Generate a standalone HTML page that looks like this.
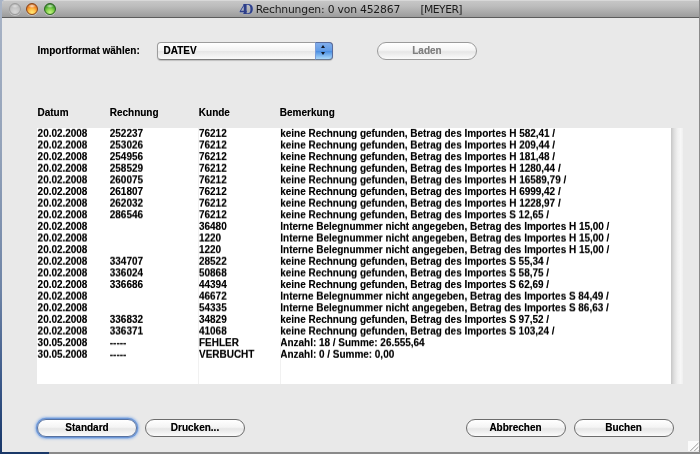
<!DOCTYPE html>
<html><head><meta charset="utf-8">
<style>
*{box-sizing:border-box;margin:0;padding:0}
html,body{width:700px;height:454px;overflow:hidden}
body{background:#8a8a8a;position:relative;font-family:"Liberation Sans",sans-serif;color:#000}
#desk1{position:absolute;left:0;top:0;width:3px;height:454px;background:linear-gradient(#a9b4c6 0,#93a2b9 150px,#6e84a6 290px,#3d5a8a 380px,#1d3c6e 440px,#1a3868 454px)}
#desk3{position:absolute;left:0;top:0;width:8px;height:8px;background:#a9b4c6}
#desk2{position:absolute;left:0;top:450px;width:49px;height:4px;background:#1a3868}
#win{position:absolute;left:2px;top:0;width:697px;height:451.5px;overflow:hidden;will-change:transform;border-radius:4px 0 0 0}
#winbg{position:absolute;left:2.3px;top:0;width:697px;height:451.5px;background:#e9e9e9;border-radius:4px 0 0 0}
#tb{position:absolute;left:0;top:0;width:698px;height:18px;background:linear-gradient(#d8d8d8 0,#d8d8d8 1px,#c6c6c6 1px,#bdbdbd 6px,#9c9c9c 17px,#5c5c5c 17px,#5c5c5c 18px)}
.tl{position:absolute;top:3px;width:12px;height:12px;border-radius:50%;box-shadow:0 1px 0.5px rgba(255,255,255,.35)}
#title,#title2{position:absolute;left:253.7px;top:1.6px;font-family:"DejaVu Sans","Liberation Sans",sans-serif;font-size:10.8px;line-height:15px;white-space:pre;color:#1a1a1a;letter-spacing:-0.2px}
#title2{left:418.4px;letter-spacing:-0.55px}
#logo{position:absolute;left:237.4px;top:0.7px;font-family:"Liberation Serif",serif;font-weight:bold;font-size:15px;line-height:17px;letter-spacing:-4.2px;color:#2e3f88;white-space:pre;text-shadow:0 0 1px #aebde6}
.b{font-weight:bold;font-size:10px;line-height:12px;white-space:pre;position:absolute;text-shadow:0 0 .5px rgba(0,0,0,.4)}
#lbl{left:35.5px;top:45.2px}
#pop{position:absolute;left:155px;top:42px;width:176px;height:17.5px;border-radius:4px;border:1px solid #9c9c9c;border-bottom-color:#7c7c7c;background:linear-gradient(#ffffff,#f2f2f2 48%,#e6e6e6 52%,#fafafa);box-shadow:0 1px 1px rgba(0,0,0,.18)}
#pop span{position:absolute;left:5.5px;top:1.9px;font-weight:bold;font-size:10px;line-height:12px;text-shadow:0 0 .6px rgba(0,0,0,.5)}
#pop i{position:absolute;right:-1px;top:-1px;width:18.5px;height:17.5px;border-radius:0 4px 4px 0;background:linear-gradient(#82aeec,#629ce6 48%,#4a8ee2 52%,#aad8fa);border:1px solid #5a6c9c;border-left-color:#7a9cd8;border-bottom-color:#6a7890}
#pop i:before,#pop i:after{content:"";position:absolute;left:5.3px;border:2.6px solid transparent}
#pop i:before{top:-0.3px;border-bottom:3.2px solid #101828}
#pop i:after{top:9px;border-top:3.2px solid #101828}
.btn{position:absolute;height:18px;border-radius:9px;border:1px solid #6c6c6c;background:linear-gradient(#ffffff,#f4f4f4 45%,#e6e6e6 55%,#fbfbfb);font-weight:bold;font-size:10px;line-height:16px;text-align:center;text-shadow:0 0 .6px rgba(0,0,0,.5)}
#list{position:absolute;left:35px;top:128px;width:634px;height:255.8px;background:#fff}
#sb{position:absolute;left:669px;top:128px;width:12px;height:255.8px;background:linear-gradient(90deg,#c6c6c6,#dedede 25%,#f0f0f0 55%,#f7f7f7 80%,#efefef)}
.vl{position:absolute;top:128px;width:1px;height:255.8px;background:#f1f1f1}
.r{position:absolute;left:0;top:0;height:12px;width:634px;will-change:transform}
.r span{position:absolute;top:0;font-weight:bold;font-size:10px;line-height:12px;white-space:pre;text-shadow:0 0 .5px rgba(0,0,0,.4);letter-spacing:-0.025px}
</style></head><body>
<div id="desk3"></div><div id="desk1"></div><div id="desk2"></div>
<div id="winbg"></div>
<div id="win">
<div id="tb">
<div class="tl" style="left:7px;background:radial-gradient(ellipse 4px 2px at 50% 20%,rgba(255,255,255,.55),rgba(255,255,255,0)),radial-gradient(circle at 50% 80%,#d6d6d6,#c4c4c4 50%,#a6a6a6 100%);border:1px solid #9c9c9c"></div>
<div class="tl" style="left:24.3px;background:radial-gradient(ellipse 4px 2px at 50% 20%,rgba(255,255,255,.8),rgba(255,255,255,0)),radial-gradient(circle at 50% 85%,#ffe878 0,#ffc048 35%,#f08828 62%,#a04810 100%);border:1px solid #8a4418"></div>
<div class="tl" style="left:41.8px;background:radial-gradient(ellipse 4px 2px at 50% 20%,rgba(255,255,255,.75),rgba(255,255,255,0)),radial-gradient(circle at 50% 85%,#c4f488 0,#8cd650 35%,#4aa830 65%,#1f6418 100%);border:1px solid #2c6422"></div>
<div id="logo">4D</div>
<div id="title">Rechnungen: 0 von 452867</div><div id="title2">[MEYER]</div>
</div>
<div class="b" id="lbl">Importformat wählen:</div>
<div id="pop"><span>DATEV</span><i></i></div>
<div class="btn" style="left:375px;top:42px;width:100px;color:#808080;border-color:#9a9a9a;text-shadow:0 0 .6px rgba(128,128,128,.6)">Laden</div>
<div class="b" style="left:35.5px;top:107.3px">Datum</div>
<div class="b" style="left:107.7px;top:107.3px">Rechnung</div>
<div class="b" style="left:196.8px;top:107.3px">Kunde</div>
<div class="b" style="left:277.8px;top:107.3px">Bemerkung</div>
<div id="list">
<div class="r" style="transform:translateY(-0.10px) rotate(0.005deg)"><span style="left:0.6px">20.02.2008</span><span style="left:72.8px">252237</span><span style="left:162px">76212</span><span style="left:243.3px">keine Rechnung gefunden, Betrag des Importes H 582,41 /</span></div>
<div class="r" style="transform:translateY(11.53px) rotate(0.005deg)"><span style="left:0.6px">20.02.2008</span><span style="left:72.8px">253026</span><span style="left:162px">76212</span><span style="left:243.3px">keine Rechnung gefunden, Betrag des Importes H 209,44 /</span></div>
<div class="r" style="transform:translateY(23.15px) rotate(0.005deg)"><span style="left:0.6px">20.02.2008</span><span style="left:72.8px">254956</span><span style="left:162px">76212</span><span style="left:243.3px">keine Rechnung gefunden, Betrag des Importes H 181,48 /</span></div>
<div class="r" style="transform:translateY(34.78px) rotate(0.005deg)"><span style="left:0.6px">20.02.2008</span><span style="left:72.8px">258529</span><span style="left:162px">76212</span><span style="left:243.3px">keine Rechnung gefunden, Betrag des Importes H 1280,44 /</span></div>
<div class="r" style="transform:translateY(46.40px) rotate(0.005deg)"><span style="left:0.6px">20.02.2008</span><span style="left:72.8px">260075</span><span style="left:162px">76212</span><span style="left:243.3px">keine Rechnung gefunden, Betrag des Importes H 16589,79 /</span></div>
<div class="r" style="transform:translateY(58.03px) rotate(0.005deg)"><span style="left:0.6px">20.02.2008</span><span style="left:72.8px">261807</span><span style="left:162px">76212</span><span style="left:243.3px">keine Rechnung gefunden, Betrag des Importes H 6999,42 /</span></div>
<div class="r" style="transform:translateY(69.66px) rotate(0.005deg)"><span style="left:0.6px">20.02.2008</span><span style="left:72.8px">262032</span><span style="left:162px">76212</span><span style="left:243.3px">keine Rechnung gefunden, Betrag des Importes H 1228,97 /</span></div>
<div class="r" style="transform:translateY(81.28px) rotate(0.005deg)"><span style="left:0.6px">20.02.2008</span><span style="left:72.8px">286546</span><span style="left:162px">76212</span><span style="left:243.3px">keine Rechnung gefunden, Betrag des Importes S 12,65 /</span></div>
<div class="r" style="transform:translateY(92.91px) rotate(0.005deg)"><span style="left:0.6px">20.02.2008</span><span style="left:162px">36480</span><span style="left:243.3px">Interne Belegnummer nicht angegeben, Betrag des Importes H 15,00 /</span></div>
<div class="r" style="transform:translateY(104.53px) rotate(0.005deg)"><span style="left:0.6px">20.02.2008</span><span style="left:162px">1220</span><span style="left:243.3px">Interne Belegnummer nicht angegeben, Betrag des Importes H 15,00 /</span></div>
<div class="r" style="transform:translateY(116.16px) rotate(0.005deg)"><span style="left:0.6px">20.02.2008</span><span style="left:162px">1220</span><span style="left:243.3px">Interne Belegnummer nicht angegeben, Betrag des Importes H 15,00 /</span></div>
<div class="r" style="transform:translateY(127.79px) rotate(0.005deg)"><span style="left:0.6px">20.02.2008</span><span style="left:72.8px">334707</span><span style="left:162px">28522</span><span style="left:243.3px">keine Rechnung gefunden, Betrag des Importes S 55,34 /</span></div>
<div class="r" style="transform:translateY(139.41px) rotate(0.005deg)"><span style="left:0.6px">20.02.2008</span><span style="left:72.8px">336024</span><span style="left:162px">50868</span><span style="left:243.3px">keine Rechnung gefunden, Betrag des Importes S 58,75 /</span></div>
<div class="r" style="transform:translateY(151.04px) rotate(0.005deg)"><span style="left:0.6px">20.02.2008</span><span style="left:72.8px">336686</span><span style="left:162px">44394</span><span style="left:243.3px">keine Rechnung gefunden, Betrag des Importes S 62,69 /</span></div>
<div class="r" style="transform:translateY(162.66px) rotate(0.005deg)"><span style="left:0.6px">20.02.2008</span><span style="left:162px">46672</span><span style="left:243.3px">Interne Belegnummer nicht angegeben, Betrag des Importes S 84,49 /</span></div>
<div class="r" style="transform:translateY(174.29px) rotate(0.005deg)"><span style="left:0.6px">20.02.2008</span><span style="left:162px">54335</span><span style="left:243.3px">Interne Belegnummer nicht angegeben, Betrag des Importes S 86,63 /</span></div>
<div class="r" style="transform:translateY(185.92px) rotate(0.005deg)"><span style="left:0.6px">20.02.2008</span><span style="left:72.8px">336832</span><span style="left:162px">34829</span><span style="left:243.3px">keine Rechnung gefunden, Betrag des Importes S 97,52 /</span></div>
<div class="r" style="transform:translateY(197.54px) rotate(0.005deg)"><span style="left:0.6px">20.02.2008</span><span style="left:72.8px">336371</span><span style="left:162px">41068</span><span style="left:243.3px">keine Rechnung gefunden, Betrag des Importes S 103,24 /</span></div>
<div class="r" style="transform:translateY(209.17px) rotate(0.005deg)"><span style="left:0.6px">30.05.2008</span><span style="left:72.8px">-----</span><span style="left:162px">FEHLER</span><span style="left:243.3px">Anzahl: 18 / Summe: 26.555,64</span></div>
<div class="r" style="transform:translateY(220.79px) rotate(0.005deg)"><span style="left:0.6px">30.05.2008</span><span style="left:72.8px">-----</span><span style="left:162px">VERBUCHT</span><span style="left:243.3px">Anzahl: 0 / Summe: 0,00</span></div>
</div><!--endlist-->
<div id="sb"></div>
<div class="vl" style="left:196px"></div><div class="vl" style="left:277.5px"></div>
<div class="btn" style="left:35px;top:418.5px;width:100px;border-color:#56719f;box-shadow:0 0 0 1.2px #6e98d8,0 0 2.5px 2px #94b6e8">Standard</div>
<div class="btn" style="left:143px;top:418.5px;width:100px">Drucken...</div>
<div class="btn" style="left:463.5px;top:418.5px;width:100px">Abbrechen</div>
<div class="btn" style="left:571.5px;top:418.5px;width:100px">Buchen</div>
<svg id="grip" style="position:absolute;left:685.5px;top:440.8px" width="11.5" height="10.7" viewBox="0 0 11.5 10.7"><rect width="11.5" height="10.7" fill="#fbfbfb"/><path d="M1.6 10.7 L10.4 2 M5.6 10.7 L10.4 6 M9.2 10.7 L10.4 9.6" stroke="#9a9a9a" stroke-width="1" fill="none"/></svg>
</div>
</body></html>
